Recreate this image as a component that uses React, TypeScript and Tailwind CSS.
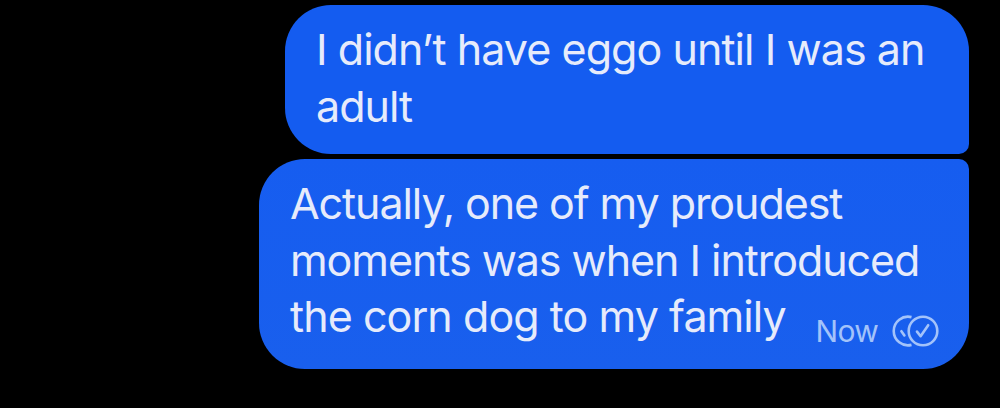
import { clsx } from 'clsx';

const messages = [
    {
        lines: [
            { text: 'I didn’t have eggo until I was an', tracking: 'tracking-[-0.94px]' },
            { text: 'adult', tracking: 'tracking-[-1px]' },
        ],
        bubble: 'h-[149px] w-[684px] rounded-br-[10px] bg-[#145cf0]',
    },
    {
        lines: [
            { text: 'Actually, one of my proudest', tracking: 'tracking-[-1.07px]' },
            { text: 'moments was when I introduced', tracking: 'tracking-[-1.05px]' },
            { text: 'the corn dog to my family', tracking: 'tracking-[-0.93px]' },
        ],
        bubble: 'h-[210px] w-[710px] rounded-tr-[10px] bg-linear-to-b from-[#165df0] to-[#195fed]',
        status: 'Now',
    },
];

// Two overlapping check circles, the left one cut off behind the right
function DeliveredIcon() {
    return (
        <svg width="48" height="34" viewBox="0 0 48 34" fill="none" stroke="currentColor" strokeWidth="2.6" strokeLinejoin="round">
            <circle cx="32" cy="17" r="14.3" />
            <path d="M26 17.6l3.6 4.6 7.6-11" strokeLinecap="round" />
            <path d="M20.5 3.13A14.3 14.3 0 1 0 20.5 30.87" />
            <path d="M10.4 17.2l3 4.2" strokeLinecap="round" />
        </svg>
    );
}

export default function App() {
    return (
        <div className="flex h-[408px] w-[1000px] flex-col items-end gap-[5px] bg-black pt-[5px] pr-[31px] font-['Inter',sans-serif] text-[43px] leading-[56.5px] text-[#e6ebfb]">
            {messages.map((message) => (
                <div key={message.lines[0].text} className={clsx('relative rounded-[46px] pt-4 pl-[31px]', message.bubble)}>
                    <p className="whitespace-nowrap">
                        {message.lines.map((line) => (
                            <span key={line.text} className={clsx('block', line.tracking)}>{line.text}</span>
                        ))}
                    </p>
                    {message.status && (
                        <div className="absolute right-[30px] bottom-5 flex items-center gap-[13px] text-[30px] leading-9 tracking-[-0.7px] text-[#a3c3fa]">
                            <span>{message.status}</span>
                            <DeliveredIcon />
                        </div>
                    )}
                </div>
            ))}
        </div>
    );
}
